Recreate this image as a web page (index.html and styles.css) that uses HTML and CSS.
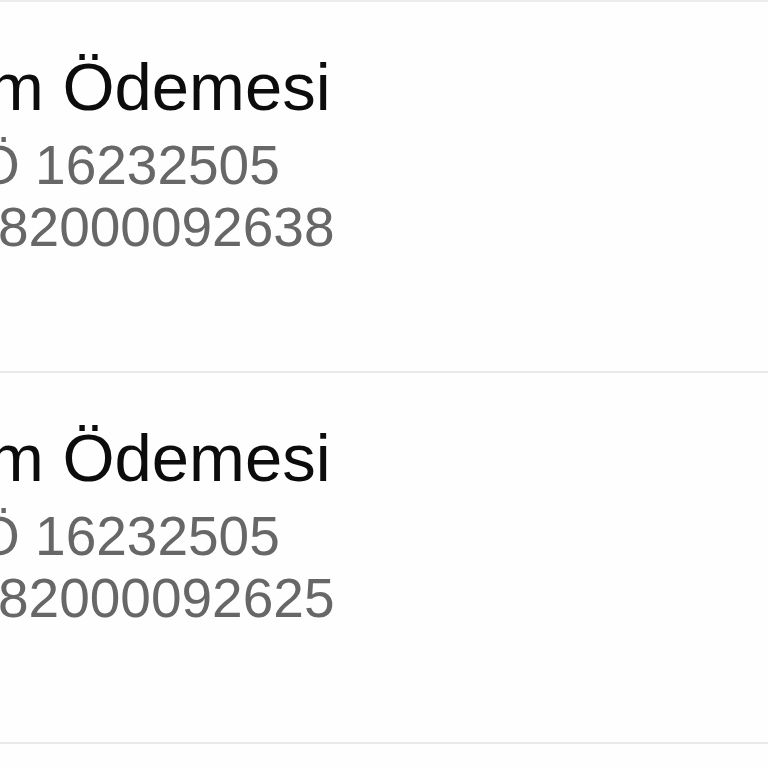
FILE: index.html
```html
<!DOCTYPE html>
<html>
  <head>
    <meta charset="utf-8" />
    <title>Ödemeler</title>
    <link rel="stylesheet" href="styles.css">
  </head>
  <body>
    <ul class="payments">
      <li class="payment">
        <div class="title">m Ödemesi</div>
        <div class="ref">Ö 16232505</div>
        <div class="code">82000092638</div>
      </li>
      <li class="payment">
        <div class="title">m Ödemesi</div>
        <div class="ref">Ö 16232505</div>
        <div class="code">82000092625</div>
      </li>
    </ul>
  </body>
</html>
```

FILE: styles.css
```css
body {
  margin: 0;
  background-color: #fefefe;
  font-family: "Liberation Sans", Arial, sans-serif;
  overflow: hidden;
}
.payments {
  list-style: none;
  margin: 0;
  padding: 0;
  border-top: 2px solid #ececec;
}
.payment {
  height: 371px;
  box-sizing: border-box;
  padding-top: 47px;
  border-bottom: 2px solid #e9e9e9;
  white-space: nowrap;
}
.title {
  font-size: 67px;
  line-height: 76px;
  color: #0c0c0c;
  margin-left: -12px;
  margin-bottom: 9px;
}
.ref,
.code {
  font-size: 55px;
  line-height: 62px;
  color: #676767;
}
.ref {
  margin-left: -23px;
}
.code {
  margin-left: -2px;
}
```
